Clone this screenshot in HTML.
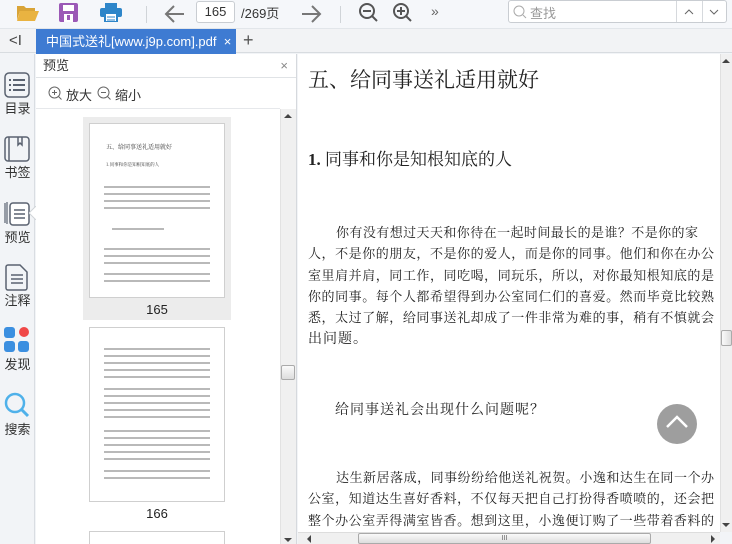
<!DOCTYPE html>
<html style="overflow:hidden;width:732px;height:544px"><head><meta charset="utf-8">
<style>
*{margin:0;padding:0;box-sizing:border-box}
html,body{overflow:hidden}
body{width:732px;height:544px;overflow:hidden;background:#f2f4f7;font-family:"Liberation Sans","Noto Sans CJK SC",sans-serif;position:relative;color:#333}
.abs{position:absolute}
#tb{left:0;top:0;width:732px;height:29px;background:#f5f7fa;border-bottom:1px solid #e2e6ea}
#tabs{left:0;top:29px;width:732px;height:24px;background:#f2f3f5;border-bottom:1px solid #d8dce0}
.tab{left:36px;top:29px;width:200px;height:25px;background:#3e7bd2;color:#fff;font-size:13px;line-height:25px;padding-left:10px;white-space:nowrap}
#rail{left:0;top:54px;width:35px;height:490px;background:#f2f4f7;border-right:1px solid #d9dde2}
.lbl{font-size:13px;color:#333;width:35px;text-align:center;left:0}
#panel{left:36px;top:54px;width:261px;height:490px;background:#fff;border-right:1px solid #d6d9dd}
#doc{left:298px;top:54px;width:422px;height:478px;background:#fff;overflow:hidden}
.l{font-family:"Noto Serif CJK SC","Noto Sans CJK SC",serif;font-size:13px;line-height:21.3px;height:21.3px;color:#222;position:absolute;left:10px;width:406px;text-align:justify;text-align-last:justify;white-space:nowrap}
.in{left:38px;width:378px}
.thumb{background:#fff;border:1px solid #cfcfcf;overflow:hidden}
.lines{position:absolute;left:14px;right:14px;background:repeating-linear-gradient(#fff 0 2px,#8a8a8a 2px 4px,#fff 4px 7px);opacity:.6}
</style></head><body>
<div id="tb" class="abs"></div>
<svg class="abs" style="left:16px;top:4px" width="24" height="18" viewBox="0 0 24 18"><path d="M1 2h7l2 2h9v3H4L1 16z" fill="#d9a437"/><path d="M4 7h19l-4 10H1z" fill="#e9b341"/></svg>
<svg class="abs" style="left:59px;top:3px" width="19" height="19" viewBox="0 0 19 19"><rect x="0" y="0" width="19" height="19" rx="2" fill="#9b59b6"/><rect x="4" y="2" width="11" height="6" fill="#fff"/><rect x="5" y="11" width="9" height="8" fill="#fff"/><rect x="8" y="12" width="3" height="5" fill="#9b59b6"/></svg>
<svg class="abs" style="left:100px;top:3px" width="22" height="19" viewBox="0 0 22 19"><rect x="5" y="0" width="12" height="5" fill="#2e86c9"/><rect x="0" y="5" width="22" height="9" rx="2" fill="#2e86c9"/><rect x="5" y="10" width="12" height="9" fill="#fff" stroke="#2e86c9" stroke-width="2"/><path d="M7 14h8M7 17h8" stroke="#2e86c9"/></svg>
<div class="abs" style="left:146px;top:6px;width:1px;height:17px;background:#d0d4d8"></div>
<svg class="abs" style="left:164px;top:4px" width="22" height="20" viewBox="0 0 22 20"><path d="M20 10H3M10 2L2 10l8 8" stroke="#777" stroke-width="2" fill="none"/></svg>
<div class="abs" style="left:196px;top:1px;width:39px;height:22px;background:#fff;border:1px solid #c9cdd2;border-radius:3px;font-size:13px;line-height:20px;text-align:center;color:#333">165</div>
<div class="abs" style="left:241px;top:3px;font-size:13px;color:#333">/269页</div>
<svg class="abs" style="left:300px;top:4px" width="22" height="20" viewBox="0 0 22 20"><path d="M2 10h17M12 2l8 8-8 8" stroke="#777" stroke-width="2" fill="none"/></svg>
<div class="abs" style="left:340px;top:6px;width:1px;height:17px;background:#d0d4d8"></div>
<svg class="abs" style="left:358px;top:2px" width="22" height="22" viewBox="0 0 22 22"><circle cx="9" cy="9" r="7" stroke="#555" stroke-width="2" fill="none"/><path d="M5 9h8M14 14l5 5" stroke="#555" stroke-width="2"/></svg>
<svg class="abs" style="left:392px;top:2px" width="22" height="22" viewBox="0 0 22 22"><circle cx="9" cy="9" r="7" stroke="#555" stroke-width="2" fill="none"/><path d="M5 9h8M9 5v8M14 14l5 5" stroke="#555" stroke-width="2"/></svg>
<div class="abs" style="left:431px;top:3px;font-size:14px;color:#666">»</div>
<div class="abs" style="left:508px;top:0px;width:219px;height:23px;background:#fff;border:1px solid #c9cdd2;border-radius:3px"></div>
<svg class="abs" style="left:512px;top:4px" width="16" height="16" viewBox="0 0 16 16"><circle cx="7" cy="7" r="5" stroke="#aaa" fill="none"/><path d="M11 11l3 3" stroke="#aaa"/></svg>
<div class="abs" style="left:530px;top:3px;font-size:13px;color:#999">查找</div>
<div class="abs" style="left:676px;top:1px;width:1px;height:21px;background:#d6d9dd"></div>
<div class="abs" style="left:702px;top:1px;width:1px;height:21px;background:#d6d9dd"></div>
<svg class="abs" style="left:684px;top:8px" width="10" height="8"><path d="M1 6l4-4 4 4" stroke="#666" fill="none"/></svg>
<svg class="abs" style="left:709px;top:8px" width="10" height="8"><path d="M1 2l4 4 4-4" stroke="#666" fill="none"/></svg>

<div id="tabs" class="abs"></div>
<div class="abs" style="left:9px;top:32px;font-size:15px;color:#444">&lt;I</div>
<div class="tab abs">中国式送礼[www.j9p.com].pdf&nbsp; ×</div>
<div class="abs" style="left:243px;top:30px;font-size:18px;color:#555">+</div>

<div id="rail" class="abs"></div>
<svg class="abs" style="left:4px;top:72px" width="26" height="26" viewBox="0 0 26 26"><rect x="1" y="1" width="24" height="24" rx="4" stroke="#5a6270" stroke-width="1.5" fill="none"/><path d="M5 8h2M9 8h12M5 13h2M9 13h12M5 18h2M9 18h12" stroke="#5a6270" stroke-width="2"/></svg>
<div class="abs lbl" style="top:98px">目录</div>
<svg class="abs" style="left:4px;top:136px" width="26" height="26" viewBox="0 0 26 26"><rect x="1" y="1" width="24" height="24" rx="3" stroke="#5a6270" stroke-width="1.5" fill="none"/><path d="M5 1v24M14 1v8l2-2 2 2V1" stroke="#5a6270" stroke-width="1.5" fill="none"/></svg>
<div class="abs lbl" style="top:162px">书签</div>
<svg class="abs" style="left:4px;top:200px" width="26" height="26" viewBox="0 0 26 26"><path d="M1 23V3M3 24V2" stroke="#5a6270" stroke-width="1.2"/><rect x="6" y="3" width="19" height="22" rx="3" stroke="#5a6270" stroke-width="1.5" fill="#fff"/><path d="M10 10h11M10 14h11M10 18h11" stroke="#5a6270" stroke-width="1.5"/></svg>
<svg class="abs" style="left:29px;top:206px" width="8" height="14"><path d="M7 0L0 7l7 7" fill="#fff" stroke="#d0d4d8"/></svg>
<div class="abs lbl" style="top:227px">预览</div>
<svg class="abs" style="left:5px;top:264px" width="24" height="27" viewBox="0 0 24 27"><path d="M3 1h12l7 7v16a2 2 0 0 1-2 2H3a2 2 0 0 1-2-2V3a2 2 0 0 1 2-2z" stroke="#5a6270" stroke-width="1.5" fill="none"/><path d="M6 11h12M6 15h12M6 19h12" stroke="#5a6270" stroke-width="1.5"/></svg>
<div class="abs lbl" style="top:290px">注释</div>
<svg class="abs" style="left:4px;top:327px" width="26" height="26" viewBox="0 0 26 26"><rect x="0" y="0" width="11" height="11" rx="3" fill="#3b8fe0"/><circle cx="20" cy="5" r="5" fill="#f04848"/><rect x="0" y="14" width="11" height="11" rx="3" fill="#3b8fe0"/><rect x="14" y="14" width="11" height="11" rx="3" fill="#3b8fe0"/></svg>
<div class="abs lbl" style="top:354px">发现</div>
<svg class="abs" style="left:4px;top:392px" width="26" height="26" viewBox="0 0 26 26"><circle cx="11" cy="11" r="9" stroke="#4fb1ea" stroke-width="2.5" fill="none"/><path d="M17 17l7 7" stroke="#4fb1ea" stroke-width="3"/></svg>
<div class="abs lbl" style="top:419px">搜索</div>

<div id="panel" class="abs"></div>
<div class="abs" style="left:36px;top:54px;width:260px;height:24px;border-bottom:1px solid #e0e3e6;font-size:13px;line-height:24px;padding-left:7px;color:#333">预览<span style="position:absolute;right:8px;color:#888">×</span></div>
<svg class="abs" style="left:48px;top:86px" width="14" height="14"><circle cx="6.5" cy="6.5" r="5.5" stroke="#666" fill="none"/><path d="M4 6.5h5M6.5 4v5M10.5 10.5l3 3" stroke="#666"/></svg>
<div class="abs" style="left:66px;top:85px;font-size:13px">放大</div>
<svg class="abs" style="left:97px;top:86px" width="14" height="14"><circle cx="6.5" cy="6.5" r="5.5" stroke="#666" fill="none"/><path d="M4 6.5h5M10.5 10.5l3 3" stroke="#666"/></svg>
<div class="abs" style="left:115px;top:85px;font-size:13px">缩小</div>
<div class="abs" style="left:36px;top:108px;width:244px;height:1px;background:#e6e8eb"></div>
<div class="abs" style="left:280px;top:109px;width:16px;height:435px;background:#f0f0f0;border-left:1px solid #e2e2e2"></div>
<svg class="abs" style="left:284px;top:113px" width="8" height="6"><path d="M0 5l4-4 4 4z" fill="#444"/></svg>
<div class="abs" style="left:281px;top:365px;width:14px;height:15px;background:linear-gradient(#fafafa,#ddd);border:1px solid #aaa;border-radius:2px"></div>
<svg class="abs" style="left:284px;top:537px" width="8" height="6"><path d="M0 1l4 4 4-4z" fill="#444"/></svg>
<div class="abs" style="left:83px;top:117px;width:148px;height:203px;background:#ececec"></div>
<div class="abs thumb" style="left:89px;top:123px;width:136px;height:175px">
 <div class="abs" style="left:16px;top:18px;font-size:6px;font-family:'Noto Serif CJK SC',serif;color:#333;white-space:nowrap">五、给同事送礼适用就好</div>
 <div class="abs" style="left:16px;top:38px;font-size:4.5px;font-family:'Noto Serif CJK SC',serif;color:#333;white-space:nowrap">1.同事和你是知根知底的人</div>
 <div class="lines" style="top:60px;height:28px"></div>
 <div class="lines" style="top:102px;height:4px;right:60px;left:22px"></div>
 <div class="lines" style="top:122px;height:21px"></div>
 <div class="lines" style="top:147px;height:14px"></div>
</div>
<div class="abs" style="left:83px;top:302px;width:148px;text-align:center;font-size:13px;color:#222">165</div>
<div class="abs thumb" style="left:89px;top:327px;width:136px;height:175px">
 <div class="lines" style="top:18px;height:35px"></div>
 <div class="lines" style="top:58px;height:35px"></div>
 <div class="lines" style="top:100px;height:35px"></div>
 <div class="lines" style="top:140px;height:16px"></div>
</div>
<div class="abs" style="left:83px;top:506px;width:148px;text-align:center;font-size:13px;color:#222">166</div>
<div class="abs thumb" style="left:89px;top:531px;width:136px;height:13px;border-bottom:none"></div>

<div id="doc" class="abs">
 <div class="abs" style="left:10px;top:10px;font-family:'Noto Serif CJK SC',serif;font-size:21px;color:#222;white-space:nowrap">五、给同事送礼适用就好</div>
 <div class="abs" style="left:10px;top:91px;font-family:'Liberation Serif','Noto Serif CJK SC',serif;font-size:17px;color:#222;white-space:nowrap"><b>1.</b> 同事和你是知根知底的人</div>
 <div class="l in" style="top:167px;width:362px">你有没有想过天天和你待在一起时间最长的是谁？不是你的家</div>
 <div class="l" style="top:188.3px">人，不是你的朋友，不是你的爱人，而是你的同事。他们和你在办公</div>
 <div class="l" style="top:209.6px">室里肩并肩，同工作，同吃喝，同玩乐，所以，对你最知根知底的是</div>
 <div class="l" style="top:230.9px">你的同事。每个人都希望得到办公室同仁们的喜爱。然而毕竟比较熟</div>
 <div class="l" style="top:252.2px">悉，太过了解，给同事送礼却成了一件非常为难的事，稍有不慎就会</div>
 <div class="l" style="top:273.5px;text-align-last:left;font-size:14px;letter-spacing:1px">出问题。</div>
 <div class="l" style="top:345px;left:37px;text-align-last:left;font-size:14px;letter-spacing:1px">给同事送礼会出现什么问题呢？</div>
 <div class="l in" style="top:412px">达生新居落成，同事纷纷给他送礼祝贺。小逸和达生在同一个办</div>
 <div class="l" style="top:433.3px">公室，知道达生喜好香料，不仅每天把自己打扮得香喷喷的，还会把</div>
 <div class="l" style="top:454.6px">整个办公室弄得满室皆香。想到这里，小逸便订购了一些带着香料的</div>
 <div class="abs" style="left:359px;top:350px;width:40px;height:40px;border-radius:50%;background:#9e9e9e"></div>
 <svg class="abs" style="left:366px;top:360px" width="26" height="16"><path d="M3 13l10-10 10 10" stroke="#fff" stroke-width="2.5" fill="none"/></svg>
</div>
<div class="abs" style="left:720px;top:54px;width:12px;height:478px;background:#f0f0f0;border-left:1px solid #e0e0e0"></div>
<svg class="abs" style="left:722px;top:58px" width="8" height="6"><path d="M0 5l4-4 4 4z" fill="#444"/></svg>
<div class="abs" style="left:721px;top:330px;width:11px;height:16px;background:linear-gradient(90deg,#fafafa,#ddd);border:1px solid #aaa;border-radius:2px"></div>
<svg class="abs" style="left:722px;top:522px" width="8" height="6"><path d="M0 1l4 4 4-4z" fill="#444"/></svg>
<div class="abs" style="left:298px;top:532px;width:422px;height:12px;background:#f0f0f0;border-top:1px solid #ddd"></div>
<svg class="abs" style="left:306px;top:535px" width="6" height="8"><path d="M5 0L1 4l4 4z" fill="#444"/></svg>
<div class="abs" style="left:358px;top:533px;width:293px;height:11px;background:linear-gradient(#fafafa,#ddd);border:1px solid #aaa;border-radius:2px;font-size:7px;text-align:center;color:#666;line-height:9px">III</div>
<svg class="abs" style="left:710px;top:535px" width="6" height="8"><path d="M1 0l4 4-4 4z" fill="#444"/></svg>
</body></html>
